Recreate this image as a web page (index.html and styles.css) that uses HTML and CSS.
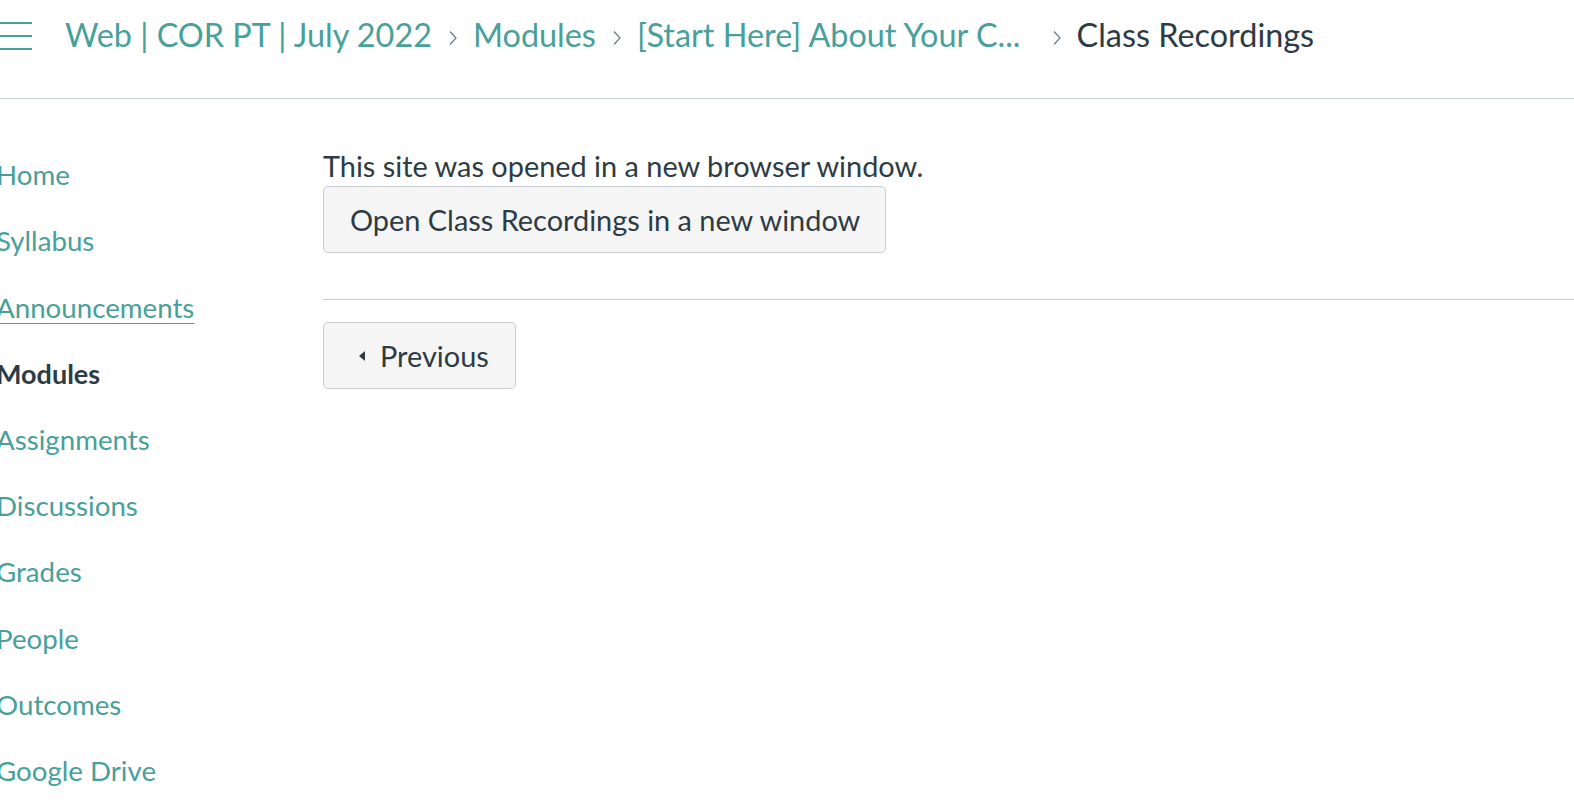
FILE: index.html
```html
<!DOCTYPE html>
<html lang="en">
<head>
<meta charset="utf-8">
<title>Class Recordings</title>
<link rel="stylesheet" href="styles.css">
</head>
<body>
<header class="header">
  <button class="burger" aria-label="Toggle course navigation">
    <span></span><span></span><span></span>
  </button>
  <nav class="crumbs">
    <a class="crumb" href="#">Web | COR PT | July 2022</a>
    <svg class="sep" viewBox="0 0 8 16" width="8" height="16"><path d="M1 1.5 L7 8 L1 14.5" fill="none" stroke="currentColor" stroke-width="1.2"/></svg>
    <a class="crumb" href="#">Modules</a>
    <svg class="sep" viewBox="0 0 8 16" width="8" height="16"><path d="M1 1.5 L7 8 L1 14.5" fill="none" stroke="currentColor" stroke-width="1.2"/></svg>
    <a class="crumb trunc" href="#">[Start Here] About Your C...</a>
    <svg class="sep" viewBox="0 0 8 16" width="8" height="16"><path d="M1 1.5 L7 8 L1 14.5" fill="none" stroke="currentColor" stroke-width="1.2"/></svg>
    <span class="crumb current">Class Recordings</span>
  </nav>
</header>
<div class="main">
  <ul class="sidenav">
    <li><a href="#">Home</a></li>
    <li><a href="#">Syllabus</a></li>
    <li><a href="#" class="hover">Announcements</a></li>
    <li><a href="#" class="active">Modules</a></li>
    <li><a href="#">Assignments</a></li>
    <li><a href="#">Discussions</a></li>
    <li><a href="#">Grades</a></li>
    <li><a href="#">People</a></li>
    <li><a href="#">Outcomes</a></li>
    <li><a href="#">Google Drive</a></li>
  </ul>
  <section class="content">
    <p class="msg">This site was opened in a new browser window.</p>
    <button class="btn">Open Class Recordings in a new window</button>
    <hr class="rule">
    <button class="btn prev"><svg class="tri" viewBox="0 0 6 10" width="6" height="10"><path d="M6 0 L0 5 L6 10 Z" fill="currentColor"/></svg>Previous</button>
  </section>
</div>
</body>
</html>
```
FILE: styles.css
```css
html, body {
  margin: 0;
  padding: 0;
  background: #fff;
  overflow: hidden;
}
body {
  font-family: Lato, "Noto Sans", sans-serif;
  color: #2d3b45;
}
a { color: #48a09b; text-decoration: none; }

.header {
  height: 98px;
  border-bottom: 1px solid #c7cdd1;
  display: flex;
  align-items: flex-start;
}
.burger {
  width: 32px;
  height: 28px;
  padding: 0;
  margin: 22px 0 0 0;
  border: 0;
  background: none;
  display: flex;
  flex-direction: column;
  justify-content: space-between;
}
.burger span {
  display: block;
  height: 2px;
  width: 32px;
  background: #48a09b;
}
.crumbs {
  display: flex;
  align-items: center;
  margin-left: 33px;
  margin-top: 19px;
  height: 32px;
  font-size: 32.4px;
  white-space: nowrap;
}
.crumb { line-height: 32px; }
.sep {
  color: #6b7780;
  margin: 6px 16px 0 17px;
}
.trunc { margin-right: 15px; }
.current { color: #2d3b45; }

.main {
  display: flex;
}
.sidenav {
  list-style: none;
  margin: 0 0 0 -4px;
  padding: 43px 0 0 0;
  width: 327px;
  flex: none;
  font-size: 27.7px;
}
.sidenav li {
  height: 66.2px;
  display: flex;
  align-items: center;
}
.sidenav a { line-height: 1; }
.sidenav a.hover { text-decoration: underline; text-underline-offset: 5px; text-decoration-thickness: 1px; }
.sidenav a.active { color: #2d3b45; font-weight: 700; font-size: 27px; }

.content {
  flex: 1;
  padding-top: 50px;
}
.msg {
  margin: 0 0 4px 0;
  font-size: 28.9px;
  line-height: 33px;
}
.btn {
  font-family: inherit;
  font-size: 28.9px;
  color: #2d3b45;
  background: #f5f5f5;
  border: 1px solid #c7cdd1;
  border-radius: 5px;
  height: 67px;
  padding: 0 25px 0 26px;
  display: inline-flex;
  align-items: center;
}
.rule {
  border: 0;
  border-top: 1px solid #c7cdd1;
  margin: 46px 0 22px 0;
}
.prev { padding: 0 26px 0 35px; }
.tri { margin-right: 15px; }
```
